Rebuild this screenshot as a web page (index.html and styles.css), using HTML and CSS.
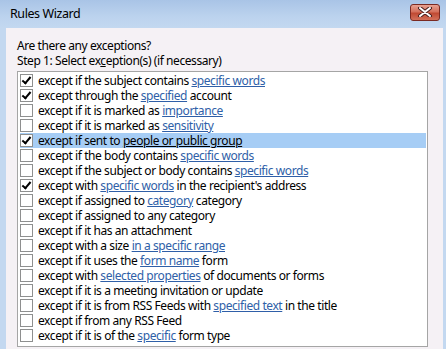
FILE: index.html
```html
<!DOCTYPE html>
<html>
<head>
<meta charset="utf-8">
<link rel="stylesheet" href="styles.css">
</head>
<body>
<div class="window">
  <div class="titlebar">
    <span class="title">Rules Wizard</span>
    <span class="close"><svg width="16" height="10" viewBox="0 0 16 10"><path d="M3 1 L13 9 M13 1 L3 9" stroke="#4a2020" stroke-width="4" stroke-linecap="round"/><path d="M3 1 L13 9 M13 1 L3 9" stroke="#fff" stroke-width="2" stroke-linecap="round"/></svg></span>
  </div>
  <div class="client">
    <div class="line">Are there any exceptions?</div>
    <div class="line">Step 1: Select ex<u>c</u>eption(s) (if necessary)</div>
    <div class="list">
      <div class="row"><span class="cb on"></span><span class="txt">except if the subject contains <a>specific words</a></span></div>
      <div class="row"><span class="cb on"></span><span class="txt">except through the <a>specified</a> account</span></div>
      <div class="row"><span class="cb"></span><span class="txt">except if it is marked as <a>importance</a></span></div>
      <div class="row"><span class="cb"></span><span class="txt">except if it is marked as <a>sensitivity</a></span></div>
      <div class="row sel"><span class="cb on"></span><span class="txt">except if sent to <a>people or public group</a></span></div>
      <div class="row"><span class="cb"></span><span class="txt">except if the body contains <a>specific words</a></span></div>
      <div class="row"><span class="cb"></span><span class="txt">except if the subject or body contains <a>specific words</a></span></div>
      <div class="row"><span class="cb on"></span><span class="txt">except with <a>specific words</a> in the recipient's address</span></div>
      <div class="row"><span class="cb"></span><span class="txt">except if assigned to <a>category</a> category</span></div>
      <div class="row"><span class="cb"></span><span class="txt">except if assigned to any category</span></div>
      <div class="row"><span class="cb"></span><span class="txt">except if it has an attachment</span></div>
      <div class="row"><span class="cb"></span><span class="txt">except with a size <a>in a specific range</a></span></div>
      <div class="row"><span class="cb"></span><span class="txt">except if it uses the <a>form name</a> form</span></div>
      <div class="row"><span class="cb"></span><span class="txt">except with <a>selected properties</a> of documents or forms</span></div>
      <div class="row"><span class="cb"></span><span class="txt">except if it is a meeting invitation or update</span></div>
      <div class="row"><span class="cb"></span><span class="txt">except if it is from RSS Feeds with <a>specified text</a> in the title</span></div>
      <div class="row"><span class="cb"></span><span class="txt">except if from any RSS Feed</span></div>
      <div class="row"><span class="cb"></span><span class="txt">except if it is of the <a>specific</a> form type</span></div>
    </div>
  </div>
</div>
</body>
</html>
```
FILE: styles.css
```css
html, body {
  margin: 0;
  padding: 0;
}
body {
  width: 446px;
  height: 349px;
  overflow: hidden;
  background: #c3d8f0;
  font-family: "Noto Sans", "Open Sans", sans-serif;
  font-size: 12px;
  letter-spacing: -0.42px;
  color: #000;
}
.window {
  display: flex;
  flex-direction: column;
  height: 349px;
}
.titlebar {
  height: 28px;
  flex: none;
  display: flex;
  align-items: center;
  justify-content: space-between;
  padding: 0 6px 0 10px;
  background: linear-gradient(#a9c4e6, #bcd3ee 60%, #c3d8f0);
}
.title {
  font-size: 12.5px;
  color: #000;
  margin-top: -2px;
}
.close {
  width: 30px;
  height: 17px;
  margin-top: -4px;
  box-sizing: border-box;
  border: 1px solid #7a2a22;
  border-radius: 3px;
  background: linear-gradient(#e8a292, #d4705c 45%, #c04a33 55%, #d2705a);
  display: flex;
  align-items: center;
  justify-content: center;
}
.client {
  flex: 1;
  margin: 0 3px 0 6px;
  background: #f5f1f5;
  padding: 10px 0 0 11px;
}
.line {
  line-height: 15px;
  height: 15px;
}
.list {
  margin-top: 3px;
  width: 411px;
  box-sizing: border-box;
  border: 1px solid #a5a5a5;
  background: #fff;
  padding: 1px 1px 3px 2px;
}
.row {
  display: flex;
  align-items: center;
  gap: 5px;
  height: 15px;
  line-height: 15px;
  white-space: nowrap;
}
.txt {
  line-height: 15px;
  height: 15px;
}
.row.sel {
  background: #a6cdf5;
}
.row a {
  color: #2f5fa8;
  text-decoration: underline;
}
.row.sel a {
  color: #000;
}
.cb {
  width: 13px;
  height: 13px;
  box-sizing: border-box;
  border: 1px solid #8e8f8f;
  background: #fff;
  flex: none;
  position: relative;
}
.cb.on::after {
  content: "";
  position: absolute;
  left: 3px;
  top: 0px;
  width: 3px;
  height: 7px;
  border-right: 2px solid #000;
  border-bottom: 2px solid #000;
  transform: rotate(40deg);
}
```
